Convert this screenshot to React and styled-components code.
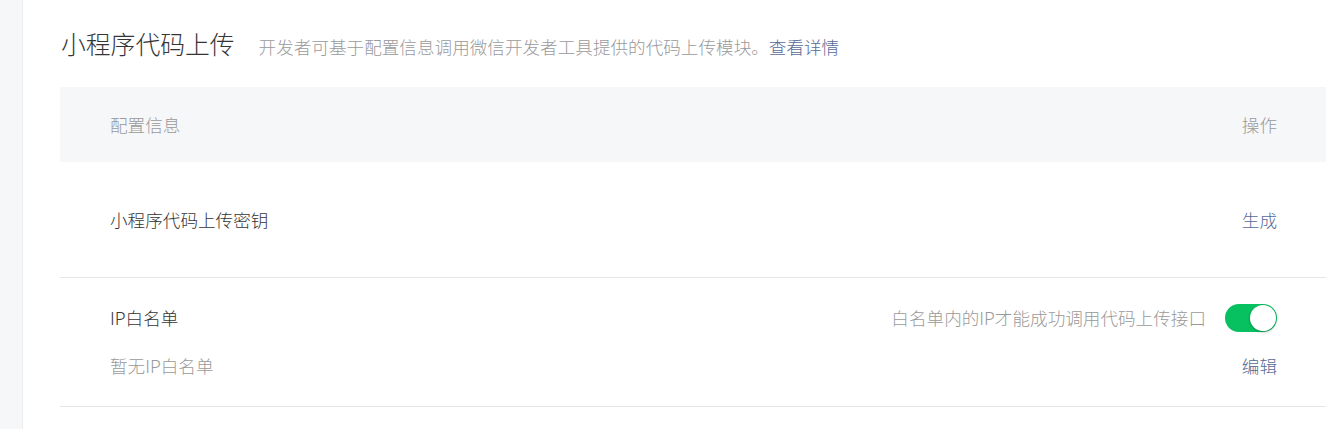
import { useState } from "react";
import styled, { createGlobalStyle } from "styled-components";

const GlobalStyle = createGlobalStyle`
  body {
    margin: 0;
    background: #fff;
    font-family: "Noto Sans CJK SC", "Noto Sans", sans-serif;
    font-weight: 300;
  }
`;

export default function App() {
  const [whitelistOn, setWhitelistOn] = useState(true);

  return (
    <>
      <GlobalStyle />
      <Page>
        <Sidebar />
        <Main>
          <TitleBar>
            <Title>小程序代码上传</Title>
            <Desc>
              开发者可基于配置信息调用微信开发者工具提供的代码上传模块。
              <Link>查看详情</Link>
            </Desc>
          </TitleBar>
          <Table>
            <HeadRow>
              <span>配置信息</span>
              <span>操作</span>
            </HeadRow>
            <Row>
              <Cell>小程序代码上传密钥</Cell>
              <Link>生成</Link>
            </Row>
            <Row $tall>
              <Column>
                <Cell>IP白名单</Cell>
                <Cell $muted>暂无IP白名单</Cell>
              </Column>
              <Column $right>
                <SwitchLine>
                  <Cell $muted>白名单内的IP才能成功调用代码上传接口</Cell>
                  <Switch $on={whitelistOn} onClick={() => setWhitelistOn(!whitelistOn)}>
                    <Knob $on={whitelistOn} />
                  </Switch>
                </SwitchLine>
                <Link>编辑</Link>
              </Column>
            </Row>
          </Table>
        </Main>
      </Page>
    </>
  );
}

const Page = styled.div`
  display: flex;
  min-height: 429px;
`;

const Sidebar = styled.div`
  width: 22px;
  flex-shrink: 0;
  background: #f6f7f9;
  border-right: 1px solid #ececec;
`;

const Main = styled.div`
  flex: 1;
  padding: 26px 9px 0 37px;
`;

const TitleBar = styled.div`
  display: flex;
  align-items: baseline;
  gap: 24px;
  margin-bottom: 26px;
`;

const Title = styled.h2`
  margin: 0 0 0 1px;
  font-size: 24.8px;
  line-height: 34px;
  font-weight: 300;
  color: #353535;
`;

const Desc = styled.p`
  margin: 0;
  font-size: 17.6px;
  color: #9a9a9a;
`;

const Link = styled.a`
  color: #576b95;
  font-size: 17.6px;
  line-height: 28px;
  cursor: pointer;
`;

const Table = styled.div`
  display: flex;
  flex-direction: column;
`;

const HeadRow = styled.div`
  display: flex;
  justify-content: space-between;
  align-items: center;
  height: 75px;
  padding: 0 49px 0 50px;
  background: #f6f7f9;
  color: #9a9a9a;
  font-size: 17.6px;
`;

const Row = styled.div`
  display: flex;
  justify-content: space-between;
  align-items: ${(p) => (p.$tall ? "flex-start" : "center")};
  height: ${(p) => (p.$tall ? "76px" : "115px")};
  padding: ${(p) => (p.$tall ? "26px 49px 26px 50px" : "0 49px 0 50px")};
  border-bottom: 1px solid #e7e7e7;
`;

const Column = styled.div`
  display: flex;
  flex-direction: column;
  align-items: ${(p) => (p.$right ? "flex-end" : "flex-start")};
  gap: 20px;
`;

const Cell = styled.span`
  font-size: 17.6px;
  line-height: 28px;
  color: ${(p) => (p.$muted ? "#9a9a9a" : "#353535")};
`;

const SwitchLine = styled.div`
  display: flex;
  align-items: center;
  gap: 19px;
`;

const Switch = styled.div`
  position: relative;
  width: 52px;
  height: 28px;
  border-radius: 14px;
  background: ${(p) => (p.$on ? "#07c160" : "#e5e5e5")};
  cursor: pointer;
`;

const Knob = styled.div`
  position: absolute;
  top: 1px;
  left: ${(p) => (p.$on ? "25px" : "1px")};
  width: 26px;
  height: 26px;
  border-radius: 50%;
  background: #fff;
  box-shadow: 0 1px 3px rgba(0, 0, 0, 0.3);
`;
